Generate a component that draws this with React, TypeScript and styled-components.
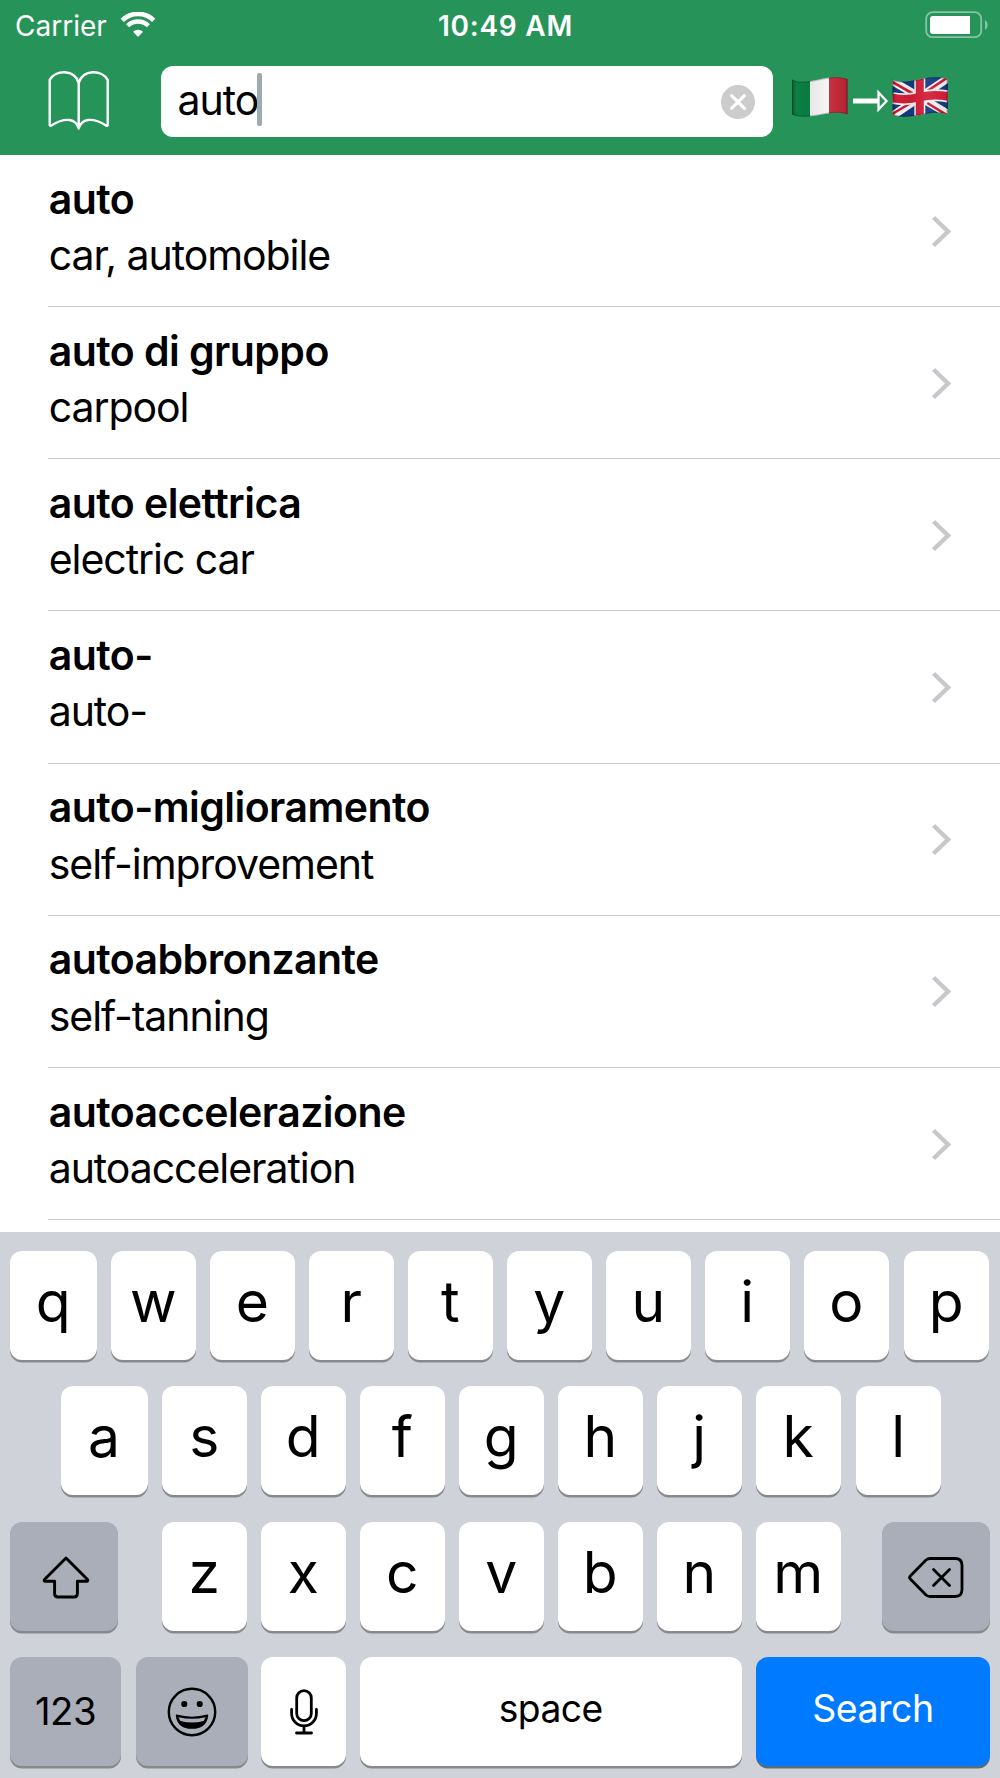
import React from "react";
import styled, { createGlobalStyle, css } from "styled-components";

const GlobalStyle = createGlobalStyle`
  body { margin: 0; background: #fff; }
  *, *::before, *::after { box-sizing: border-box; }
  svg { display: block; flex: none; }
`;

const Screen = styled.div`
  width: 1000px;
  height: 1778px;
  overflow: hidden;
  display: flex;
  flex-direction: column;
  background: #fff;
  color: #000;
  font-family: Inter, "Liberation Sans", sans-serif;
`;

const Header = styled.header`
  height: 155px;
  flex: none;
  background: #269359;
  color: #fff;
`;

const StatusBar = styled.div`
  height: 51px;
  display: grid;
  grid-template-columns: 1fr auto 1fr;
  align-items: center;
  padding: 0 11px 0 15px;
  font-size: 28px;
`;

const Carrier = styled.div`
  display: flex;
  align-items: center;
  svg { margin: -2px 0 0 13px; }
`;

const Clock = styled.div`
  font-weight: 600;
  letter-spacing: 0.75px;
  padding-left: 7px;
`;

const BatterySlot = styled.div`
  display: flex;
  justify-content: flex-end;
  margin-top: -2px;
`;

const NavBar = styled.div`
  display: flex;
  align-items: flex-start;
  height: 104px;
  padding: 15px 0 0 48px;
`;

const BookButton = styled.div`
  width: 113px;
  height: 71px;
  padding-top: 4px;
`;

const SearchField = styled.div`
  width: 612px;
  height: 71px;
  border-radius: 12px;
  background: #fff;
  color: #000;
  display: flex;
  align-items: center;
  padding: 0 18px 0 16.500px;
  font-size: 41px;
`;

const Query = styled.span`
  line-height: 66px;
  padding-bottom: 3px;
  letter-spacing: -1px;
`;

const Caret = styled.span`
  width: 5px;
  height: 53px;
  margin-left: -1px;
  margin-top: -4px;
  border-radius: 2px;
  background: #9cabac;
`;

const ClearButton = styled.div`
  margin-left: auto;
  margin-top: 1px;
  height: 34px;
`;

const Languages = styled.div`
  display: flex;
  padding: 11px 0 0 19px;
`;

const List = styled.ul`
  list-style: none;
  margin: 0;
  padding: 0 0 0 48px;
  height: 1077px;
  flex: none;
`;

const Entry = styled.li`
  height: 152.17px;
  border-bottom: 1px solid #c8c7cc;
  display: flex;
  justify-content: space-between;
  align-items: center;
  padding-right: 48px;
`;

const EntryText = styled.div`
  display: flex;
  flex-direction: column;
  height: 100%;
  padding: 15.6px 0 0 0.7px;
  font-size: 41px;
  line-height: 57px;
  white-space: nowrap;
  font-variant-ligatures: none;
`;

const Term = styled.span`
  font-weight: 600;
  letter-spacing: -0.55px;
`;

const Meaning = styled.span`
  margin-top: -0.6px;
  letter-spacing: -1.05px;
`;

const Keyboard = styled.div`
  flex: 1;
  background: #d0d2d9;
  padding: 19px 0 0 10px;
  display: flex;
  flex-direction: column;
  gap: 26.4px;
`;

const KeyRow = styled.div<{ $indent?: number }>`
  display: flex;
  gap: 14.5px;
  height: 109px;
  padding-left: ${(p) => p.$indent ?? 0}px;
`;

type Tone = "letter" | "dark" | "blue";

const Key = styled.div<{ $w?: number; $ml?: number; $tone?: Tone; $size?: number; $lift?: number }>`
  width: ${(p) => p.$w ?? 84.5}px;
  margin-left: ${(p) => p.$ml ?? 0}px;
  height: 109px;
  flex: none;
  border-radius: 12px;
  display: flex;
  justify-content: center;
  align-items: center;
  padding-bottom: ${(p) => p.$lift ?? 8.5}px;
  font-size: ${(p) => p.$size ?? 57}px;
  letter-spacing: ${(p) => (p.$size ? -0.5 : 0)}px;
  line-height: 1;
  background: #fff;
  box-shadow: 0 2.5px 0 #87898d;
  ${(p) => p.$tone === "dark" && css`background: #a9aeb9;`}
  ${(p) => p.$tone === "blue" && css`background: #007aff; color: #fff; box-shadow: 0 2.5px 0 #5d6a7c;`}
`;

const Glyph = styled.span<{ $left?: number; $top?: number }>`
  padding: ${(p) => p.$top ?? 0}px 0 0 ${(p) => p.$left ?? 0}px;
`;

const WifiIcon = () => (
  <svg width="36" height="26" viewBox="0 0 36 26" fill="none" stroke="#fff">
    <path d="M2.3 8.3a22.3 22.3 0 0 1 31.4 0" strokeWidth="4.6" />
    <path d="M7.6 13.8a14.8 14.8 0 0 1 20.8 0" strokeWidth="4.4" />
    <path d="M18 25l-5-5.2a7.2 7.2 0 0 1 10 0z" fill="#fff" stroke="none" />
  </svg>
);

const BatteryIcon = () => (
  <svg width="64" height="28" viewBox="0 0 64 28">
    <rect x="1.2" y="1.2" width="55" height="25" rx="6.5" fill="none" stroke="#fff" strokeOpacity=".45" strokeWidth="1.8" />
    <path d="M60 9.2c3.6 1.6 3.6 8 0 9.6z" fill="#fff" fillOpacity=".45" />
    <path d="M8 5h37v18H8a3 3 0 0 1-3-3V8a3 3 0 0 1 3-3z" fill="#fff" />
  </svg>
);

const BookIcon = () => (
  <svg width="62" height="62" viewBox="0 0 62 62" fill="none" stroke="#fff" strokeWidth="2.4" strokeLinejoin="round">
    <path d="M30.700 13C26.500 -1 7.500 -.500 1.700 9.800V54.500Q1.700 56.500 3.500 55.500C12 50 17 49.500 21.500 50Q28.500 51 30.700 58.500Q32.900 51 39.900 50C44.500 49.500 49.500 50 58 55.500Q59.700 56.500 59.700 54.500V9.800C54 -.500 35 -1 30.700 13V58" />
  </svg>
);

const ClearIcon = () => (
  <svg width="34" height="34" viewBox="0 0 34 34">
    <circle cx="17" cy="17" r="17" fill="#ccc" />
    <path d="M10.600 10.600l12.800 12.800M23.400 10.600L10.600 23.400" stroke="#fff" strokeWidth="3.200" strokeLinecap="round" />
  </svg>
);

const wave = "M0 2.500C5 5 12 5.500 20 3.800S38 -.500 46 .300Q52 .700 55.500 2V37.300C50 35.500 42 35 33 37S14 40 8 39.500Q3 39 0 37.500Z";

const LanguagesIcon = () => (
  <svg width="158" height="43" viewBox="0 0 158 43">
    <defs>
      <clipPath id="flagShape"><path d={wave} /></clipPath>
      <linearGradient id="flagShade">
        <stop offset="0" stopColor="#000" stopOpacity=".3" />
        <stop offset=".08" stopColor="#000" stopOpacity="0" />
        <stop offset=".35" stopColor="#000" stopOpacity=".06" />
        <stop offset=".65" stopColor="#fff" stopOpacity=".06" />
        <stop offset=".95" stopColor="#000" stopOpacity=".06" />
        <stop offset="1" stopColor="#000" stopOpacity=".3" />
      </linearGradient>
    </defs>
    <g clipPath="url(#flagShape)">
      <rect width="18.500" height="43" fill="#0b8043" />
      <rect x="18" width="19.500" height="43" fill="#f6f6f6" />
      <rect x="37" width="19" height="43" fill="#c42636" />
      <rect width="56" height="43" fill="url(#flagShade)" />
      <path d={wave} fill="none" stroke="#000" strokeOpacity=".22" strokeWidth="2" />
    </g>
    <path d="M61 24H86.500" stroke="#fff" strokeWidth="5" />
    <path d="M86.500 15.500V32.500L94.500 24Z" fill="none" stroke="#fff" strokeWidth="2.300" />
    <g transform="translate(100.300 0)">
      <g clipPath="url(#flagShape)">
        <rect width="56" height="43" fill="#163a84" />
        <path d="M0 4L56 37M0 39L56 1" stroke="#f3f3f3" strokeWidth="8" />
        <path d="M0 5L22 17.500M35 26L56 39M0 37L20 25M35 14L56 0" stroke="#cf1b33" strokeWidth="2.600" />
        <path d="M27.500 0V43" stroke="#f3f3f3" strokeWidth="11" />
        <path d="M0 21C12 23.500 20 22 28 20S46 17.500 56 19.500" stroke="#f3f3f3" strokeWidth="12" fill="none" />
        <path d="M27.500 0V43" stroke="#d51f38" strokeWidth="8" />
        <path d="M0 21C12 23.500 20 22 28 20S46 17.500 56 19.500" stroke="#d51f38" strokeWidth="8.500" fill="none" />
        <rect width="56" height="43" fill="url(#flagShade)" />
        <path d={wave} fill="none" stroke="#000" strokeOpacity=".22" strokeWidth="2" />
      </g>
    </g>
  </svg>
);

const Chevron = () => (
  <svg width="21" height="34" viewBox="0 -1 21 34" fill="none" stroke="#c7c7cc" strokeWidth="4.400">
    <path d="M2.500 2.500L17 16.500L2.500 30.500" />
  </svg>
);

const ShiftIcon = () => (
  <svg width="48" height="43" viewBox="0 0 48 43" fill="none" stroke="#000" strokeWidth="2.900" strokeLinejoin="round">
    <path d="M24 2L45.500 23.500Q46.500 25.300 44.500 25.300H35.400V37.500Q35.400 41 32 41H16Q12.600 41 12.600 37.500V25.300H3.500Q1.500 25.300 2.500 23.500Z" />
  </svg>
);

const DeleteIcon = () => (
  <svg width="56" height="41" viewBox="0 0 56 41" fill="none" stroke="#000" strokeWidth="2.800" strokeLinejoin="round" strokeLinecap="round">
    <path d="M18 3Q20 1.500 22 1.500H47Q54 1.500 54 8.500V32.500Q54 39.500 47 39.500H22Q20 39.500 18 38L2.300 22Q1 20.500 2.300 19Z" />
    <path d="M25.500 12.500L41.500 28.500M41.500 12.500L25.500 28.500" />
  </svg>
);

const SmileIcon = () => (
  <svg width="50" height="50" viewBox="0 0 50 50">
    <circle cx="25" cy="25" r="23.200" fill="none" stroke="#000" strokeWidth="2.400" />
    <circle cx="17.300" cy="17" r="3.100" />
    <circle cx="32.700" cy="17" r="3.100" />
    <path d="M9.500 28.300Q25 32.500 40.500 28.300Q39 41 25 41T9.500 28.300Z" stroke="#000" strokeWidth="1.500" strokeLinejoin="round" />
    <path d="M11.500 30.200Q25 33.500 38.500 30.200Q37.800 32.500 36.500 34Q25 37.200 13.500 34Q12.200 32.500 11.500 30.200Z" fill="#a9aeb9" />
  </svg>
);

const MicIcon = () => (
  <svg width="28" height="46" viewBox="0 0 28 46" fill="none" stroke="#000" strokeWidth="2.800" strokeLinecap="round">
    <rect x="6.700" y="1.700" width="14.600" height="30" rx="7.300" />
    <path d="M1.600 20.500V24.500a12.400 12.400 0 0 0 24.800 0V20.500M14 37V44M6.500 44H21.500" />
  </svg>
);

const entries: [string, string][] = [
  ["auto", "car, automobile"],
  ["auto di gruppo", "carpool"],
  ["auto elettrica", "electric car"],
  ["auto-", "auto-"],
  ["auto-miglioramento", "self-improvement"],
  ["autoabbronzante", "self-tanning"],
  ["autoaccelerazione", "autoacceleration"],
];

export default function App() {
  return (
    <Screen>
      <GlobalStyle />
      <Header>
        <StatusBar>
          <Carrier>Carrier<WifiIcon /></Carrier>
          <Clock>10:49 AM</Clock>
          <BatterySlot><BatteryIcon /></BatterySlot>
        </StatusBar>
        <NavBar>
          <BookButton><BookIcon /></BookButton>
          <SearchField>
            <Query>auto</Query>
            <Caret />
            <ClearButton><ClearIcon /></ClearButton>
          </SearchField>
          <Languages><LanguagesIcon /></Languages>
        </NavBar>
      </Header>
      <List>
        {entries.map(([term, meaning]) => (
          <Entry key={term}>
            <EntryText>
              <Term>{term}</Term>
              <Meaning>{meaning}</Meaning>
            </EntryText>
            <Chevron />
          </Entry>
        ))}
      </List>
      <Keyboard>
        <KeyRow>
          {[..."qwertyuiop"].map((k) => (
            <Key key={k} $w={k === "q" ? 86.5 : undefined} $ml={k === "p" ? 1 : 0} $lift={7.5}>{k}</Key>
          ))}
        </KeyRow>
        <KeyRow $indent={50.5}>
          {[..."asdfghjkl"].map((k) => (
            <Key key={k} $w={k === "a" ? 87 : undefined} $ml={k === "l" ? 1 : 0}>{k}</Key>
          ))}
        </KeyRow>
        <KeyRow>
          <Key $tone="dark" $w={108} $lift={0}><Glyph $left={3} $top={2}><ShiftIcon /></Glyph></Key>
          {[..."zxcvbnm"].map((k) => (
            <Key key={k} $ml={k === "z" ? 29.5 : 0}>{k}</Key>
          ))}
          <Key $tone="dark" $w={108} $ml={27} $lift={0}><Glyph $left={0.5} $top={2}><DeleteIcon /></Glyph></Key>
        </KeyRow>
        <KeyRow>
          <Key $tone="dark" $w={111} $size={38.3} $lift={1.5}>123</Key>
          <Key $tone="dark" $w={111.5} $ml={0.7} $lift={0}><SmileIcon /></Key>
          <Key $ml={-1.2} $lift={0}><Glyph $left={1.5} $top={1.5}><MicIcon /></Glyph></Key>
          <Key $w={381.5} $size={37.2} $lift={7}>space</Key>
          <Key $tone="blue" $w={234} $size={37.5} $lift={6.5}>Search</Key>
        </KeyRow>
      </Keyboard>
    </Screen>
  );
}
